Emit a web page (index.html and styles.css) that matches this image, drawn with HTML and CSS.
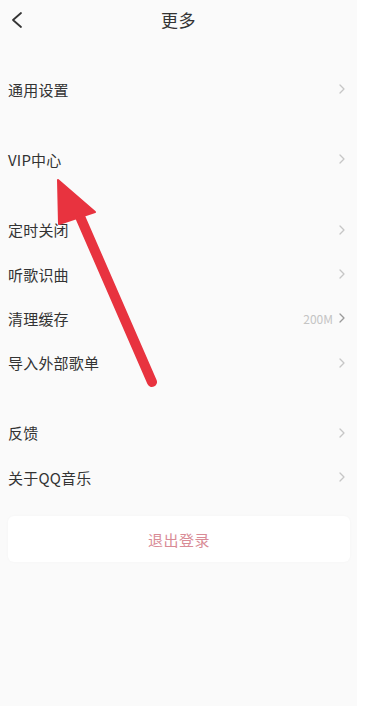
FILE: index.html
```html
<!DOCTYPE html>
<html lang="zh-CN">
<head>
<meta charset="utf-8">
<title>更多</title>
<link rel="stylesheet" href="styles.css">
</head>
<body>
<div class="page">
  <div class="screen">
    <header class="topbar">
      <svg class="back" width="14" height="18" viewBox="0 0 14 18"><path d="M11 2 L3 9 L11 16" fill="none" stroke="#333" stroke-width="1.8" stroke-linecap="round" stroke-linejoin="round"/></svg>
      <div class="title">更多</div>
    </header>

    <section class="group g-first">
      <div class="row"><span class="label">通用设置</span><span class="right"><svg class="chev" viewBox="0 0 6 10"><path d="M1 1 L5 5 L1 9" /></svg></span></div>
    </section>
    <section class="group">
      <div class="row"><span class="label">VIP中心</span><span class="right"><svg class="chev" viewBox="0 0 6 10"><path d="M1 1 L5 5 L1 9" /></svg></span></div>
    </section>
    <section class="group">
      <div class="row"><span class="label">定时关闭</span><span class="right"><svg class="chev" viewBox="0 0 6 10"><path d="M1 1 L5 5 L1 9" /></svg></span></div>
      <div class="row"><span class="label">听歌识曲</span><span class="right"><svg class="chev" viewBox="0 0 6 10"><path d="M1 1 L5 5 L1 9" /></svg></span></div>
      <div class="row"><span class="label">清理缓存</span><span class="right"><span class="value">200M</span><svg class="chev dark" viewBox="0 0 6 10"><path d="M1 1 L5 5 L1 9" /></svg></span></div>
      <div class="row"><span class="label">导入外部歌单</span><span class="right"><svg class="chev" viewBox="0 0 6 10"><path d="M1 1 L5 5 L1 9" /></svg></span></div>
    </section>
    <section class="group">
      <div class="row"><span class="label">反馈</span><span class="right"><svg class="chev" viewBox="0 0 6 10"><path d="M1 1 L5 5 L1 9" /></svg></span></div>
      <div class="row"><span class="label">关于QQ音乐</span><span class="right"><svg class="chev" viewBox="0 0 6 10"><path d="M1 1 L5 5 L1 9" /></svg></span></div>
    </section>

    <div class="logout">退出登录</div>

    <svg class="arrow" width="357" height="706" viewBox="0 0 357 706">
      <line x1="78" y1="212" x2="152" y2="382" stroke="#e8333f" stroke-width="10" stroke-linecap="round"/>
      <polygon points="58,180 95,212 59,224" fill="#e8333f" stroke="#e8333f" stroke-width="2" stroke-linejoin="round"/>
    </svg>
  </div>
  <div class="edge"></div>
</div>
</body>
</html>
```
FILE: styles.css
```css
html, body {
  margin: 0;
  padding: 0;
  background: #ffffff;
}
body {
  font-family: "Noto Sans CJK SC", "Noto Sans", sans-serif;
  color: #333333;
}
.page {
  display: flex;
  width: 377px;
  height: 706px;
  overflow: hidden;
}
.screen {
  position: relative;
  width: 357px;
  height: 706px;
  background: #fafafa;
  display: flex;
  flex-direction: column;
}
.edge {
  flex: 1;
  background: #ffffff;
}
.topbar {
  height: 40px;
  display: flex;
  align-items: center;
  justify-content: center;
  position: relative;
}
.back {
  position: absolute;
  left: 10px;
  top: 11px;
}
.title {
  font-size: 17px;
  color: #333;
  letter-spacing: 0.5px;
  margin-top: -1px;
}
.group {
  margin-top: 26px;
}
.g-first {
  margin-top: 27px;
}
.row {
  height: 44.3px;
  display: flex;
  align-items: center;
  justify-content: space-between;
  padding: 0 12px 0 8px;
}
.label {
  font-size: 15px;
  color: #333;
  letter-spacing: 0.2px;
}
.right {
  display: flex;
  align-items: center;
  gap: 6px;
}
.value {
  font-size: 12px;
  color: #c4c4c4;
}
.chev {
  width: 6px;
  height: 10px;
  fill: none;
  stroke: #c6c6c6;
  stroke-width: 1.3;
  stroke-linecap: round;
  stroke-linejoin: round;
}
.chev.dark {
  stroke: #9a9a9a;
}
.logout {
  margin: 17px 7px 0 8px;
  height: 46px;
  background: #ffffff;
  border-radius: 6px;
  box-shadow: 0 0 3px rgba(0, 0, 0, 0.03);
  display: flex;
  align-items: center;
  justify-content: center;
  font-size: 15px;
  color: #d98b96;
  letter-spacing: 0.5px;
}
.arrow {
  position: absolute;
  left: 0;
  top: 0;
  pointer-events: none;
}
```
